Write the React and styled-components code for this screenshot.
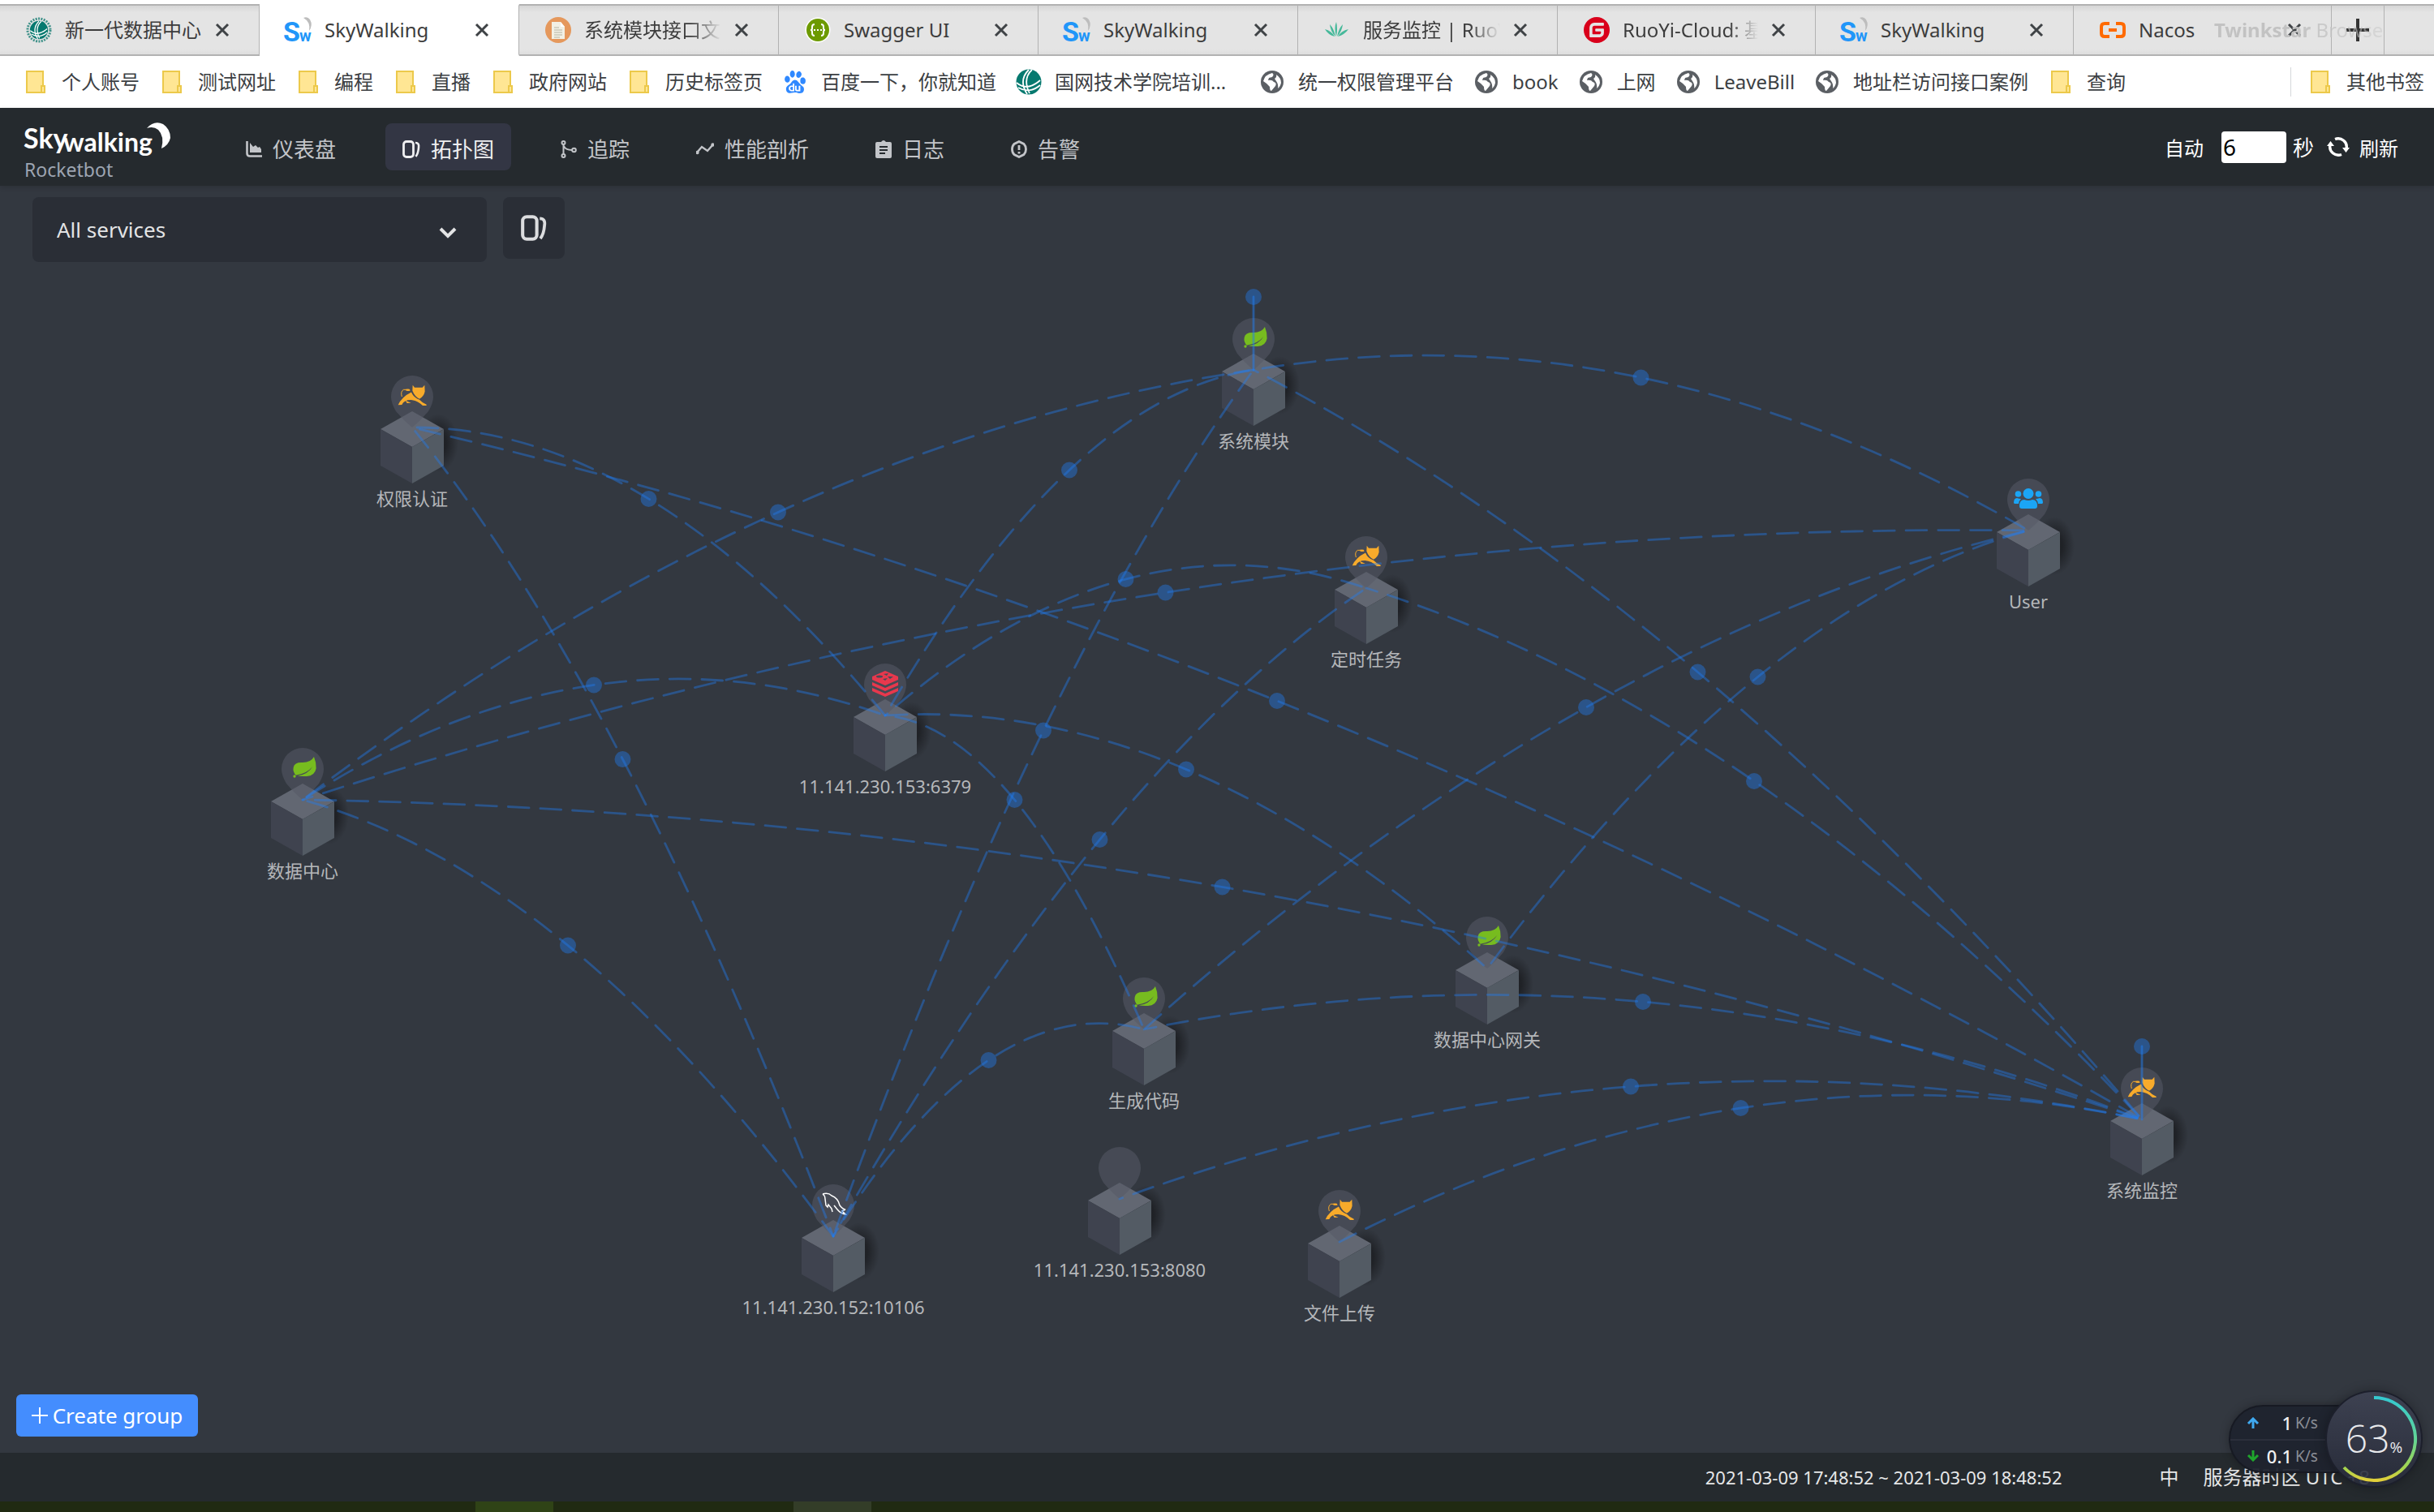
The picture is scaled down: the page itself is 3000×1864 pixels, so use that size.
import React from "react";
import styled, { createGlobalStyle, css } from "styled-components";
import { SiBaidu, SiGitee } from "react-icons/si";

const sans = `"Noto Sans", "Noto Sans CJK SC", sans-serif`;

const GlobalStyle = createGlobalStyle`
  *, *::before, *::after { box-sizing: border-box; }
  body { margin: 0; background: #333840; font-family: ${sans}; font-size: 24px; }
  button, input, select { font-family: inherit; margin: 0; }
`;

const Page = styled.div`
  position: relative;
  display: flex;
  flex-direction: column;
  min-height: 100vh;
  overflow: hidden;
`;

/* ---------- browser tabs ---------- */

const TabStrip = styled.div`
  position: relative;
  display: flex;
  padding-top: 5px;
  height: 69px;
  background: #fff;
`;

const edge = css`
  border: 0 solid #b2b2b2;
  border-width: 2px 1px 2px 0;
  background: linear-gradient(#d6d6d6, #e4e4e4 8px, #e4e4e4 54px, #dedede);
`;

const Tab = styled.div`
  ${edge}
  flex: 0 1 ${(p) => (p.$short ? 318 : 320)}px;
  min-width: 0;
  display: flex;
  align-items: center;
  gap: 16px;
  padding: 0 36px 0 32px;
  ${(p) => p.$active && css`background: #fff; border-color: transparent #b2b2b2 transparent transparent;`}
`;

const TabIcon = styled.span`
  flex: none;
  display: flex;
  width: 32px;
  height: 32px;
`;

const TabTitle = styled.span`
  flex: 1;
  min-width: 0;
  overflow: hidden;
  white-space: nowrap;
  font-size: 24px;
  line-height: 38px;
  color: #3c3c3c;
  ${(p) => p.$fade && css`mask-image: linear-gradient(90deg, #000 78%, transparent);`}
`;

const PlainButton = styled.button`
  border: 0;
  padding: 0;
  background: none;
  color: inherit;
  cursor: pointer;
`;

const CloseButton = styled(PlainButton)`
  flex: none;
  display: flex;
  width: 18px;
  height: 18px;
  color: #3f4346;
`;

const NewTab = styled(PlainButton)`
  ${edge}
  flex: none;
  display: flex;
  align-items: center;
  justify-content: center;
  width: 65px;
  color: #333;
`;

const StripRest = styled.div`
  ${edge}
  flex: 1;
  border-right-width: 0;
`;

const Watermark = styled.div`
  position: absolute;
  right: 61px;
  top: 19px;
  width: 210px;
  overflow: hidden;
  white-space: nowrap;
  line-height: 36px;
  color: #c2c2c2;
  pointer-events: none;
  mask-image: linear-gradient(90deg, #000 45%, rgba(0, 0, 0, 0.4));
`;

/* ---------- bookmarks ---------- */

const Bookmarks = styled.nav`
  display: flex;
  align-items: center;
  gap: 24px;
  height: 64px;
  padding: 0 12px 0 28px;
  background: #fff;
`;

const Bookmark = styled.a`
  display: flex;
  align-items: center;
  gap: 16px;
  flex: none;
  ${(p) => p.$wide && css`width: 276px;`}
  white-space: nowrap;
  font-size: 24px;
  line-height: 36px;
  color: #3c4043;
  text-decoration: none;
`;

const MarkIcon = styled.span`
  display: flex;
  align-items: center;
  justify-content: center;
  width: 32px;
  height: 32px;
`;

const OtherMarks = styled.div`
  margin-left: auto;
  display: flex;
  padding-left: 20px;
  border-left: 1px solid #d5d7da;
`;

/* ---------- app header ---------- */

const Header = styled.header`
  position: relative;
  z-index: 1;
  display: flex;
  align-items: center;
  height: 96px;
  padding-right: 44px;
  background: #252a2e;
  box-shadow: 0 2px 6px rgba(0, 0, 0, 0.15);
`;

const Brand = styled.div`
  display: flex;
  flex-direction: column;
  width: 282px;
  padding: 8px 0 0 28px;
  font-size: 23px;
  line-height: 28px;
  color: #9da5b2;
`;

const BrandCaption = styled.span`
  padding-left: 2px;
  margin-top: -6px;
`;

const Menu = styled.nav`
  display: flex;
  gap: 40px;
`;

const MenuLink = styled.a`
  display: flex;
  align-items: center;
  gap: 13px;
  height: 58px;
  padding: 5px 21px 0;
  border-radius: 8px;
  font-size: 26px;
  line-height: 36px;
  color: ${(p) => (p.$active ? "#efeff1" : "#c3c5c9")};
  background: ${(p) => (p.$active ? "#333644" : "transparent")};
  text-decoration: none;
`;

const Reload = styled.div`
  margin-left: auto;
  display: flex;
  align-items: center;
  font-size: 24px;
  color: #fff;
`;

const SecondsInput = styled.input`
  width: 80px;
  height: 39px;
  margin: 0 8px 0 22px;
  padding: 0 2px;
  border: 0;
  border-radius: 4px;
  background: #fff;
  color: #000;
  font-size: 28px;
`;

const Unit = styled.span`
  font-size: 26px;
`;

const ReloadButton = styled(PlainButton)`
  display: flex;
  align-items: center;
  gap: 12px;
  margin-left: 16px;
  font-size: 24px;
`;

/* ---------- topology ---------- */

const Stage = styled.main`
  position: relative;
  flex: 1;
  display: flex;
  flex-direction: column;
  justify-content: space-between;
  align-items: flex-start;
  padding: 14px 20px 20px;
  background: #333840;
`;

const Tools = styled.div`
  position: relative;
  display: flex;
  align-items: flex-start;
  gap: 20px;
  padding-left: 20px;
`;

const SelectBox = styled.label`
  position: relative;
  display: block;
  color: #e3e4e5;
`;

const ServiceSelect = styled.select`
  appearance: none;
  width: 560px;
  height: 80px;
  padding: 0 30px;
  border: 0;
  border-radius: 8px;
  background: #2a2e36;
  color: inherit;
  font-size: 26px;
`;

const Chevron = styled.svg`
  position: absolute;
  right: 37px;
  top: 37px;
  pointer-events: none;
`;

const ToolButton = styled(PlainButton)`
  display: flex;
  align-items: center;
  justify-content: center;
  width: 76px;
  height: 76px;
  border-radius: 8px;
  background: #2a2e36;
  color: #dcdddf;
`;

const CreateButton = styled(PlainButton)`
  position: relative;
  display: flex;
  align-items: center;
  justify-content: center;
  gap: 6px;
  width: 224px;
  height: 52px;
  border-radius: 6px;
  background: #448dfe;
  color: #fff;
  font-size: 26px;
`;

const Links = styled.svg`
  position: absolute;
  left: 0;
  top: 0;
  width: 100%;
  height: 100%;
  fill: none;
  pointer-events: none;
`;

const NodeBox = styled.figure`
  position: absolute;
  display: flex;
  flex-direction: column;
  align-items: center;
  width: 280px;
  margin: -66px 0 0 -140px;
`;

const NodeName = styled.figcaption`
  margin-top: 1px;
  font-size: 22px;
  line-height: 28px;
  color: #b5b7ba;
`;

/* ---------- footer ---------- */

const Footer = styled.footer`
  display: flex;
  align-items: center;
  justify-content: flex-end;
  gap: 30px;
  height: 60px;
  padding-right: 79px;
  background: #252a2e;
  color: #e6e7e8;
  font-size: 24px;
  line-height: 36px;
`;

const Range = styled.span`
  margin-right: 90px;
  font-size: 22px;
`;

const Taskbar = styled.div`
  display: flex;
  gap: 296px;
  height: 13px;
  padding-left: 586px;
  background: #202a12;
`;

const TaskItem = styled.span`
  width: 96px;
  background: ${(p) => (p.$open ? "#2f4316" : "#333d28")};
`;

/* ---------- speed meter ---------- */

const Meter = styled.aside`
  position: absolute;
  right: 14px;
  bottom: 30px;
  display: flex;
  align-items: center;
`;

const Speeds = styled.div`
  width: 150px;
  height: 84px;
  margin-right: -31px;
  border: 2px solid #171a23;
  border-radius: 42px 0 0 42px;
  background: rgba(31, 35, 46, 0.95);
  box-shadow: 0 0 12px rgba(0, 0, 0, 0.3);
`;

const Speed = styled.div`
  display: flex;
  align-items: center;
  height: 40px;
  padding-left: 20px;
  color: #8b8e96;
  font-size: 19px;
  & + & { border-top: 2px solid #2b2f3b; }
`;

const Amount = styled.b`
  width: 40px;
  margin-right: 4px;
  text-align: right;
  font-size: 22px;
  font-weight: 500;
  color: #f0f0f2;
`;

const Dial = styled.div`
  position: relative;
  display: flex;
  align-items: center;
  justify-content: center;
  width: 120px;
  height: 120px;
  padding-bottom: 2px;
  border: 2px solid #1c1f2b;
  border-radius: 50%;
  background: linear-gradient(rgba(62, 66, 82, 0.96), rgba(40, 44, 58, 0.9));
  box-shadow: 0 0 14px rgba(0, 0, 0, 0.3);
  color: #e8e9ec;
  font: 300 48px/60px "Open Sans", "Noto Sans", sans-serif;
`;

const Percent = styled.small`
  align-self: flex-end;
  margin-bottom: 28px;
  font-size: 19px;
  line-height: 36px;
  font-weight: 400;
`;

const Arc = styled.svg`
  position: absolute;
  inset: 0;
`;

/* ---------- icons ---------- */

const SkyIcon = () => (
  <svg width="32" height="32" viewBox="0 0 32 32" overflow="visible" fontFamily="Roboto, sans-serif" fontWeight="700" fill="#2196f9">
    <text x="-3" y="30" fontSize="34">S</text>
    <text x="17" y="30" fontSize="20">w</text>
    <path d="M22 1Q27-1 30 3Q34 10 29 17Q31 6 22 1Z" fill="#bdbdbd" />
  </svg>
);

const GridMark = ({ ring }) => (
  <svg width="32" height="32" viewBox="0 0 32 32">
    {ring && <circle cx="16" cy="16" r="14" fill="none" stroke="#3f9189" strokeWidth="3" strokeDasharray="2 1.4" />}
    <g transform={ring ? "translate(4.5 4.5) scale(.72)" : undefined}>
      <circle cx="16" cy="16" r="15.5" fill="#06796f" />
      <path d="M16 1Q3 14 14 31M20 1Q8 12 17 30M1 17Q14 28 30 14M3 23Q17 31 30 20" fill="none" stroke="#fff" strokeWidth="1.8" />
    </g>
  </svg>
);

const DocIcon = () => (
  <svg width="32" height="32" viewBox="0 0 32 32">
    <circle cx="16" cy="16" r="16" fill="#e5985c" />
    <path d="M8 6h11l5 6v15H8z" fill="#f2f0e4" />
    <path d="M19 6l5 6h-5z" fill="#fff" />
    <path d="M11 13h6M11 16h10M11 19h10M11 22h10M11 25h7" stroke="#c9c8b8" strokeWidth="1.5" />
  </svg>
);

const SwaggerIcon = () => (
  <svg width="32" height="32" viewBox="0 0 32 32">
    <circle cx="16" cy="16" r="15.5" fill="#fff" />
    <circle cx="16" cy="16" r="14" fill="#6d9a00" />
    <g fill="none" stroke="#fff" strokeWidth="2">
      <path d="M12 9q-3 0-3 3v2q0 2-2 2q2 0 2 2v2q0 3 3 3M20 9q3 0 3 3v2q0 2 2 2q-2 0-2 2v2q0 3-3 3" />
      <path d="M11 16h2M15 16h2M19 16h2" />
    </g>
  </svg>
);

const SproutIcon = () => (
  <svg width="32" height="32" viewBox="0 0 32 32">
    <g fill="#46b99a">
      <path d="M15 24Q12 13 15 6Q17 14 15 24ZM14 24Q8 18 7 9Q12 14 14 24ZM16 24Q18 14 23 9Q22 18 16 24Z" />
      <path d="M13 24Q5 22 1 15Q9 17 13 24ZM17 24Q21 17 30 15Q25 22 17 24Z" />
    </g>
  </svg>
);

const NacosIcon = () => (
  <svg width="32" height="32" viewBox="0 0 32 32" fill="none" stroke="#ff6a00" strokeWidth="4">
    <path d="M12 8H6q-4 0-4 4v8q0 4 4 4h6M20 8h6q4 0 4 4v8q0 4-4 4h-6M11 16h10" />
  </svg>
);

const FolderIcon = () => (
  <svg width="24" height="28" viewBox="0 0 24 28">
    <path d="M1 1H21V27H1Z" fill="#ffe694" stroke="#ecc94b" strokeWidth="2" />
    <path d="M19 19H23V27H19Z" fill="#ffe694" stroke="#ecc94b" strokeWidth="2" />
  </svg>
);

const GlobeIcon = () => (
  <svg width="28" height="28" viewBox="0 0 28 28">
    <circle cx="14" cy="14" r="14" fill="#5b5f64" />
    <path d="M3 13Q5 5 14 3Q17 5 14 8L10 9L9 12Q14 11 16 14Q20 15 18 19L13 25Q11 25 11 20Q8 16 3 13Z" fill="#fff" />
    <path d="M19 5Q25 9 25 15Q24 20 21 22Q22 17 19 13L17 10Q20 8 19 5Z" fill="#fff" />
  </svg>
);

const DialIcon = () => (
  <svg width="20" height="20" viewBox="0 0 20 20">
    <path d="M1.5 0V15Q1.500 18.500 5 18.500H20" fill="none" stroke="currentColor" strokeWidth="2.6" />
    <path d="M5 2L9 7L12 5L15 8L17 7L19 10V14H5Z" fill="currentColor" />
  </svg>
);

const TopoIcon = ({ size = 22 }) => (
  <svg width={size} height={size} viewBox="0 0 22 22" fill="none" stroke="currentColor">
    <rect x="1.500" y="1.500" width="12" height="19" rx="3.500" strokeWidth="2.800" />
    <path d="M16 3Q21 3 20 9Q19.500 16 16.500 20" strokeWidth="2.600" />
  </svg>
);

const TraceIcon = () => (
  <svg width="20" height="22" viewBox="0 0 20 22" fill="none" stroke="currentColor" strokeWidth="2">
    <circle cx="3.500" cy="3" r="2" /><circle cx="3.500" cy="19" r="2" /><circle cx="16.500" cy="12" r="2.300" />
    <path d="M3.500 5V17M4 7Q6 12 14 12" />
  </svg>
);

const ProfileIcon = () => (
  <svg width="22" height="20" viewBox="1 0 22 20" fill="none" stroke="currentColor" strokeWidth="2.400">
    <path d="M2 14L8 7L15 12L22 4" /><circle cx="2.500" cy="14" r="1" /><circle cx="21.500" cy="4.500" r="1" />
  </svg>
);

const LogIcon = () => (
  <svg width="20" height="22" viewBox="0 0 20 22">
    <path fillRule="evenodd" fill="currentColor" d="M2 2H7Q10-2 13 2H18Q20 2 20 4V20Q20 22 18 22H2Q0 22 0 20V4Q0 2 2 2ZM5 7V9H15V7ZM5 11V13H15V11ZM5 15V17H12V15Z" />
  </svg>
);

const AlarmIcon = () => (
  <svg width="20" height="22" viewBox="0 0 20 22" fill="none" stroke="currentColor" strokeWidth="2.800">
    <path d="M10 1.500L16 4.500Q18.500 7 18.500 11T16 17.500L10 20.500L4 17.500Q1.500 15 1.500 11T4 4.500Z" />
    <path d="M10 6V12M10 14V16.500" />
  </svg>
);

const RefreshIcon = () => (
  <svg width="28" height="26" viewBox="0 0 28 26" fill="none" stroke="currentColor" strokeWidth="3.400">
    <path d="M10 3.500A10.500 10 0 0 1 24 15M18 22.500A10.500 10 0 0 1 4 11" />
    <path d="M19 14H28L23.500 20ZM0 12H9L4.500 6Z" fill="currentColor" stroke="none" />
  </svg>
);

const Cross = () => (
  <svg width="18" height="18" viewBox="0 0 18 18" stroke="currentColor" strokeWidth="3"><path d="M2 2L16 16M16 2L2 16" /></svg>
);

const Logo = () => (
  <svg width="186" height="54" viewBox="0 0 186 54" overflow="visible" fill="#fff" fontFamily="Lato, sans-serif" fontWeight="700">
    <text x="1" y="36" fontSize="34">Sky</text>
    <text x="50" y="40" fontSize="32">walking</text>
    <path d="M153 11Q162 1 173 6Q182 12 182 23Q180 32 171 36Q175 21 167 13Q161 8 153 11Z" />
  </svg>
);

/* service badges, drawn around the node's anchor point */
const badges = {
  spring: (
    <g transform="scale(.333) translate(-433 -378)" fill="#77bc1f">
      <path d="M475 219Q484 240 483 262Q478 290 448 291Q425 292 414 289Q452 285 470 255Q448 282 408 287Q396 275 399 258Q403 240 428 240Q462 242 475 219Z" />
      <circle cx="403" cy="291" r="5" />
    </g>
  ),
  tomcat: (
    <g transform="scale(.333) translate(-325 -261)" fill="#f8ab2b">
      <path d="M327 104L334 113H363L371 104L372 128Q368 146 352 155Q334 146 326 124Z" />
      <path d="M273 178Q285 148 322 130Q330 150 352 158Q364 171 378 176V180H364Q345 161 320 159Q295 159 287 177Z" />
      <path d="M287 147Q281 128 293 121Q303 119 317 124" fill="none" stroke="#f8ab2b" strokeWidth="3" />
      <ellipse cx="309" cy="122" rx="8" ry="4" />
      <path d="M300 161L321 170L306 171Z" />
    </g>
  ),
  redis: (
    <g>
      <g fill="#e8384d">
        <path d="M-16-48L0-55L16-48V-44L0-37L-16-44Z" />
        <path d="M-16-41L0-34L16-41V-37L0-30L-16-37Z" />
        <path d="M-16-34L0-27L16-34V-30L0-23L-16-30Z" />
      </g>
      <g fill="#474b56"><ellipse cx="-7" cy="-48" rx="4" ry="1.500" /><path d="M-2-51L4-52L2-49ZM3-48L10-48L6-45ZM-3-45L3-46L0-43Z" /></g>
    </g>
  ),
  mysql: (
    <path
      d="M-13-52Q-6-54-2-50Q6-47 8-38Q12-33 15-33L11-31L15-27Q9-28 5-33L1-38M-13-52Q-10-50-10-46L-9-38L-7-36L-6-39L-2-34L-1-30"
      fill="none" stroke="#fff" strokeWidth="1.500"
    />
  ),
  user: (
    <g fill="#1ba5f5">
      <circle cx="0" cy="-45.500" r="6.500" />
      <path d="M-11-30Q-11-38-5-38Q0-36 5-38Q11-38 11-30Q11-27 8-27H-8Q-11-27-11-30Z" />
      <circle cx="-12.500" cy="-45" r="3.800" /><circle cx="12.500" cy="-45" r="3.800" />
      <path d="M-18-34Q-18-40-14-40Q-11-39-9-39Q-12-36-12-33H-17ZM18-34Q18-40 14-40Q11-39 9-39Q12-36 12-33H17Z" />
    </g>
  ),
};

const tabs = [
  { title: "新一代数据中心", icon: <GridMark ring /> },
  { title: "SkyWalking", icon: <SkyIcon />, active: true },
  { title: "系统模块接口文档", icon: <DocIcon />, fade: true },
  { title: "Swagger UI", icon: <SwaggerIcon /> },
  { title: "SkyWalking", icon: <SkyIcon /> },
  { title: "服务监控 | RuoYi", icon: <SproutIcon />, fade: true },
  { title: "RuoYi-Cloud: 基于", icon: <SiGitee size={32} color="#d9001b" />, fade: true, short: true },
  { title: "SkyWalking", icon: <SkyIcon />, short: true },
  { title: "Nacos", icon: <NacosIcon />, short: true },
];

const folder = <FolderIcon />;
const globe = <GlobeIcon />;
const bookmarks = [
  ["个人账号", folder], ["测试网址", folder], ["编程", folder], ["直播", folder], ["政府网站", folder],
  ["历史标签页", folder], ["百度一下，你就知道", <SiBaidu size={28} color="#2f88ff" />],
  ["国网技术学院培训...", <GridMark />, true], ["统一权限管理平台", globe], ["book", globe], ["上网", globe],
  ["LeaveBill", globe], ["地址栏访问接口案例", globe], ["查询", folder],
];

const menu = [
  ["仪表盘", <DialIcon />], ["拓扑图", <TopoIcon />], ["追踪", <TraceIcon />],
  ["性能剖析", <ProfileIcon />], ["日志", <LogIcon />], ["告警", <AlarmIcon />],
];

const nodes = {
  auth: { x: 508, y: 298, name: "权限认证", badge: "tomcat" },
  system: { x: 1545, y: 227, name: "系统模块", badge: "spring", self: true },
  user: { x: 2500, y: 425, name: "User", badge: "user" },
  job: { x: 1684, y: 496, name: "定时任务", badge: "tomcat" },
  redis: { x: 1091, y: 653, name: "11.141.230.153:6379", badge: "redis" },
  data: { x: 373, y: 757, name: "数据中心", badge: "spring" },
  gateway: { x: 1833, y: 965, name: "数据中心网关", badge: "spring" },
  gen: { x: 1410, y: 1040, name: "生成代码", badge: "spring" },
  monitor: { x: 2640, y: 1151, name: "系统监控", badge: "tomcat", self: true },
  mysql: { x: 1027, y: 1295, name: "11.141.230.152:10106", badge: "mysql" },
  web: { x: 1380, y: 1249, name: "11.141.230.153:8080" },
  file: { x: 1651, y: 1302, name: "文件上传", badge: "tomcat" },
};

const calls = [
  ["auth", "redis"], ["auth", "mysql"], ["data", "system"], ["data", "redis"], ["data", "mysql"],
  ["system", "redis"], ["system", "mysql"], ["job", "redis"], ["job", "mysql"], ["gen", "redis"],
  ["gen", "mysql"], ["gateway", "redis"], ["user", "system"], ["user", "data"], ["user", "gen"],
  ["user", "gateway"], ["monitor", "auth"], ["monitor", "system"], ["monitor", "job"],
  ["monitor", "data"], ["monitor", "gen"], ["monitor", "web"], ["monitor", "file"],
];

function TopoNode({ x, y, name, badge }) {
  return (
    <NodeBox style={{ left: x, top: y }}>
      <svg width="120" height="138" viewBox="-60 -66 120 138">
        <defs>
          <radialGradient id="shade">
            <stop offset="0.400" stopColor="#1c1e22" stopOpacity="0.850" />
            <stop offset="1" stopColor="#1c1e22" stopOpacity="0" />
          </radialGradient>
        </defs>
        <ellipse cx="32" cy="19" rx="25" ry="36" fill="url(#shade)" />
        <path d="M0-20L39 2L0 24L-39 2Z" fill="#626772" />
        <path d="M-39 2L0 24V69L-39 47Z" fill="#3f434f" />
        <path d="M39 2L0 24V69L39 47Z" fill="#535b64" />
        <path d="M0 0Q-10-8-20-20Q-26-30-26-38A26 26 0 0 1 26-38Q26-30 20-20Q10-8 0 0Z" fill="#555966" fillOpacity="0.550" />
        {badges[badge]}
      </svg>
      <NodeName>{name}</NodeName>
    </NodeBox>
  );
}

function Topology() {
  const lift = 179;
  return (
    <>
      {Object.entries(nodes).map(([id, n]) => <TopoNode key={id} {...n} />)}
      <Links>
        <g stroke="#217ef268" strokeWidth="2.800" strokeLinecap="round" strokeDasharray="25.800 13.900" strokeDashoffset="-6">
          {calls.map(([from, to]) => {
            const a = nodes[from];
            const b = nodes[to];
            return (
              <path key={from + to} d={`M${a.x} ${a.y}Q${(a.x + b.x) / 2} ${(a.y + b.y) / 2 - lift} ${b.x} ${b.y}`} />
            );
          })}
        </g>
        <g fill="#217ef268">
          {calls.map(([from, to]) => (
            <circle
              key={from + to}
              cx={(nodes[from].x + nodes[to].x) / 2}
              cy={(nodes[from].y + nodes[to].y - lift) / 2}
              r="10"
            />
          ))}
        </g>
        {Object.values(nodes).filter((n) => n.self).map((n) => (
          <g key={n.name}>
            <path d={`M${n.x} ${n.y}V${n.y - 90}`} stroke="#217ef280" strokeWidth="2.800" strokeLinecap="round" />
            <circle cx={n.x} cy={n.y - 90} r="10" fill="#217ef268" />
          </g>
        ))}
      </Links>
    </>
  );
}

const ArrowIcon = ({ color, down }) => (
  <svg width="16" height="14" viewBox="0 0 16 14" fill="none" stroke={color} strokeWidth="3">
    <path d={down ? "M8 0V11M2 6L8 12L14 6" : "M8 14V3M2 8L8 2L14 8"} />
  </svg>
);

export default function App() {
  return (
    <Page>
      <GlobalStyle />
      <TabStrip>
        {tabs.map((t, i) => (
          <Tab key={i} $active={t.active} $short={t.short}>
            <TabIcon>{t.icon}</TabIcon>
            <TabTitle $fade={t.fade}>{t.title}</TabTitle>
            <CloseButton aria-label="关闭"><Cross /></CloseButton>
          </Tab>
        ))}
        <NewTab aria-label="新标签页">
          <svg width="28" height="28" viewBox="0 0 28 28" stroke="currentColor" strokeWidth="4"><path d="M14 0V28M0 14H28" /></svg>
        </NewTab>
        <StripRest />
        <Watermark><b>Twinkstar</b> Browser</Watermark>
      </TabStrip>

      <Bookmarks>
        {bookmarks.map(([name, icon, wide]) => (
          <Bookmark key={name} href="#" $wide={wide}><MarkIcon>{icon}</MarkIcon>{name}</Bookmark>
        ))}
        <OtherMarks><Bookmark href="#"><MarkIcon>{folder}</MarkIcon>其他书签</Bookmark></OtherMarks>
      </Bookmarks>

      <Header>
        <Brand><Logo /><BrandCaption>Rocketbot</BrandCaption></Brand>
        <Menu>
          {menu.map(([name, icon], i) => (
            <MenuLink key={name} href="#" $active={i === 1}>{icon}{name}</MenuLink>
          ))}
        </Menu>
        <Reload>
          <label htmlFor="seconds">自动</label>
          <SecondsInput id="seconds" type="text" defaultValue="6" />
          <Unit>秒</Unit>
          <ReloadButton><RefreshIcon />刷新</ReloadButton>
        </Reload>
      </Header>

      <Stage>
        <Topology />
        <Tools>
          <SelectBox>
            <ServiceSelect aria-label="Services" defaultValue="all"><option value="all">All services</option></ServiceSelect>
            <Chevron width="22" height="14" viewBox="0 0 22 14" fill="none" stroke="currentColor" strokeWidth="4">
              <path d="M2 2L11 11L20 2" />
            </Chevron>
          </SelectBox>
          <ToolButton aria-label="Topology"><TopoIcon size={32} /></ToolButton>
        </Tools>
        <CreateButton>
          <svg width="20" height="20" viewBox="0 0 20 20" stroke="currentColor" strokeWidth="2"><path d="M10 0V20M0 10H20" /></svg>
          Create group
        </CreateButton>
      </Stage>

      <Footer>
        <Range>2021-03-09 17:48:52 ~ 2021-03-09 18:48:52</Range>
        <span>中</span>
        <span>服务器时区 UTC +8</span>
      </Footer>
      <Taskbar><TaskItem $open /><TaskItem /></Taskbar>

      <Meter>
        <Speeds>
          <Speed><ArrowIcon color="#3fa9f0" /><Amount>1</Amount>K/s</Speed>
          <Speed><ArrowIcon color="#1fa52c" down /><Amount>0.1</Amount>K/s</Speed>
        </Speeds>
        <Dial>
          63<Percent>%</Percent>
          <Arc width="116" height="116" viewBox="0 0 116 116" fill="none" strokeWidth="4">
            <defs>
              <linearGradient id="load" x1="0" y1="0" x2="0" y2="1">
                <stop offset="0" stopColor="#35c9d0" />
                <stop offset="0.500" stopColor="#62d596" />
                <stop offset="0.850" stopColor="#a3d34f" />
                <stop offset="1" stopColor="#e2cf3a" />
              </linearGradient>
            </defs>
            <path d="M58 7A51 51 0 1 1 21 93" stroke="url(#load)" />
          </Arc>
        </Dial>
      </Meter>
    </Page>
  );
}
